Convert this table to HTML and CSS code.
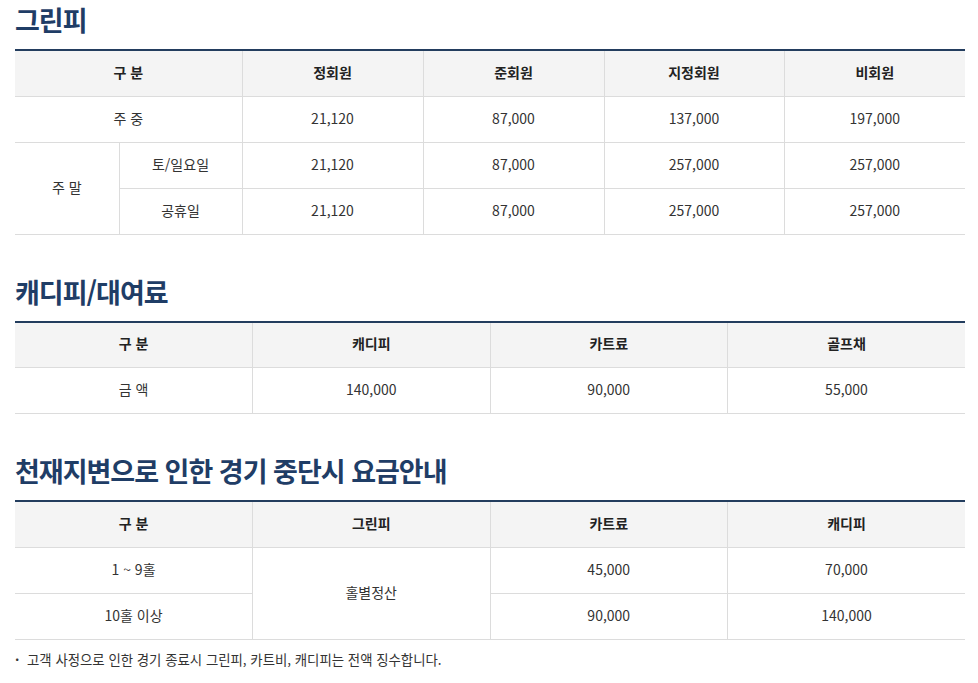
FILE: index.html
```html
<!DOCTYPE html>
<html lang="ko">
<head>
<meta charset="utf-8">
<title>요금안내</title>
<link rel="stylesheet" href="styles.css">
</head>
<body>
<div class="wrap">
  <h2 class="tit">그린피</h2>
  <table class="fee">
    <colgroup><col style="width:104px"><col style="width:123px"><col style="width:181px"><col style="width:181px"><col style="width:180px"><col style="width:181px"></colgroup>
    <thead>
      <tr><th colspan="2">구 분</th><th>정회원</th><th>준회원</th><th>지정회원</th><th>비회원</th></tr>
    </thead>
    <tbody>
      <tr><td colspan="2">주 중</td><td>21,120</td><td>87,000</td><td>137,000</td><td>197,000</td></tr>
      <tr><td rowspan="2">주 말</td><td>토/일요일</td><td>21,120</td><td>87,000</td><td>257,000</td><td>257,000</td></tr>
      <tr><td>공휴일</td><td>21,120</td><td>87,000</td><td>257,000</td><td>257,000</td></tr>
    </tbody>
  </table>

  <h2 class="tit">캐디피/대여료</h2>
  <table class="fee">
    <thead>
      <tr><th>구 분</th><th>캐디피</th><th>카트료</th><th>골프채</th></tr>
    </thead>
    <tbody>
      <tr><td>금 액</td><td>140,000</td><td>90,000</td><td>55,000</td></tr>
    </tbody>
  </table>

  <h2 class="tit">천재지변으로 인한 경기 중단시 요금안내</h2>
  <table class="fee fee-last">
    <thead>
      <tr><th>구 분</th><th>그린피</th><th>카트료</th><th>캐디피</th></tr>
    </thead>
    <tbody>
      <tr><td>1 ~ 9홀</td><td rowspan="2">홀별정산</td><td>45,000</td><td>70,000</td></tr>
      <tr><td>10홀 이상</td><td>90,000</td><td>140,000</td></tr>
    </tbody>
  </table>
  <p class="note"><span class="dot">·</span>고객 사정으로 인한 경기 종료시 그린피, 카트비, 캐디피는 전액 징수합니다.</p>
</div>
</body>
</html>
```

FILE: styles.css
```css
html, body {
  margin: 0;
  padding: 0;
  background: #fff;
}
body {
  font-family: "Noto Sans CJK KR", "Noto Sans", sans-serif;
  color: #333;
}
.wrap {
  padding: 2px 13px 0 15px;
}
.tit {
  margin: 0 0 11px;
  font-size: 27px;
  line-height: 36px;
  font-weight: 700;
  color: #1f3d66;
  letter-spacing: -1px;
}
.fee {
  width: 950px;
  table-layout: fixed;
  border-collapse: collapse;
  border-top: 2px solid #233d5e;
  margin-bottom: 39px;
}
.fee th, .fee td {
  box-sizing: border-box;
  height: 46px;
  padding: 0 0 3px;
  text-align: center;
  vertical-align: middle;
  font-size: 14px;
  line-height: 20px;
  border: 1px solid #dcdcdc;
  border-top: 0;
}
.fee tr > :first-child { border-left: 0; }
.fee tr > :last-child { border-right: 0; }
.fee th {
  background: #f4f4f4;
  font-weight: 700;
  color: #222;
}
.fee td {
  color: #333;
}
.fee-last {
  margin-bottom: 0;
}
.note {
  margin: 9px 0 0;
  font-size: 13.4px;
  line-height: 20px;
  color: #333;
}
.note .dot {
  display: inline-block;
  width: 12px;
  font-weight: 700;
}
```
